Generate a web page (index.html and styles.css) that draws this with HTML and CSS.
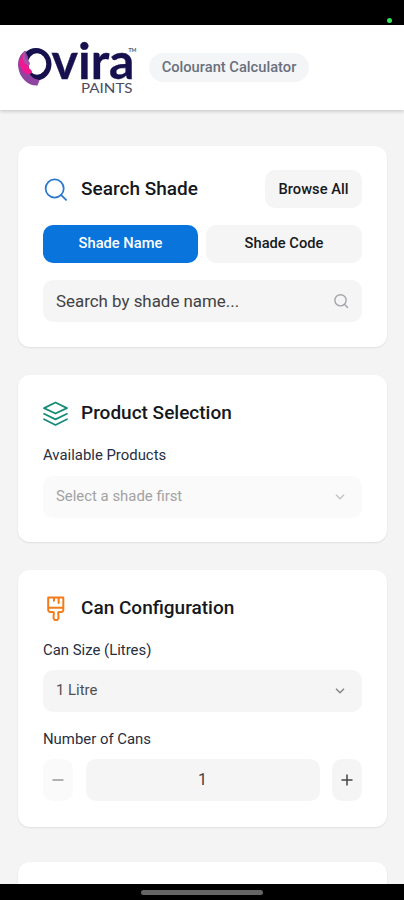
FILE: index.html
```
<!DOCTYPE html>
<html lang="en">
<head>
<meta charset="utf-8">
<meta name="viewport" content="width=device-width, initial-scale=1">
<title>Ovira Paints</title>
<link rel="stylesheet" href="styles.css">
</head>
<body>
<div class="status"><span class="dot"></span></div>
<header class="header">
  <svg class="logo" width="122" height="58" viewBox="16 38 122 58" role="img" aria-label="Ovira Paints">
    <path class="ink" fill-rule="evenodd" d="M36 48a15.500 16.200 0 1 1-.01 32.400a15.500 16.200 0 1 1 .01-32.400ZM37 53.300a9.300 10.700 0 1 0 .01 21.400a9.300 10.700 0 1 0-.01-21.400Z"/>
    <path fill="#8f45a0" d="M25 51C19.500 54 17.500 61 18.200 67C19.500 78 28 86 37.500 85.500L39.500 80C34 79 31 77 29.500 73L28 57Z"/>
    <path fill="#f01891" d="M23.500 53C18.500 59 19 68 24 72.500C26.500 74.800 30 75 32 72.500C32.500 70.500 30 69.500 29 68C28 66.500 28.500 65.500 29.500 64.500C26 61 25 57 23.500 53Z"/>
    <path fill="#a552a8" d="M26.500 50.500C24.500 54 24.500 58.500 27.500 60.500C30 61.500 31 64 28.500 65.500C23.500 64.500 21 57 24 51.500Z"/>
    <text class="ink wordmark" x="51.500" y="78.700" textLength="83" lengthAdjust="spacingAndGlyphs">vira</text>
    <text class="sub" x="81" y="93.300" textLength="51.500" lengthAdjust="spacingAndGlyphs">PAINTS</text>
    <text class="tm" x="128.500" y="51.500" textLength="8" lengthAdjust="spacingAndGlyphs">TM</text>
  </svg>
  <span class="pill">Colourant Calculator</span>
</header>
<main class="main">
  <section class="card search">
    <div class="head">
      <svg class="icon blue" viewBox="0 0 24 24"><circle cx="11.200" cy="11" r="8.700"/><path d="m17.500 17.300 4.700 4.700"/></svg>
      <h2>Search Shade</h2>
      <button class="btn browse">Browse All</button>
    </div>
    <div class="tabs">
      <button class="btn active">Shade Name</button>
      <button class="btn">Shade Code</button>
    </div>
    <div class="field">
      <span class="query">Search by shade name...</span>
      <svg class="glass" viewBox="0 0 16 16"><circle cx="7.500" cy="7.300" r="5.600"/><path d="m11.600 11.500 3 3"/></svg>
    </div>
  </section>
  <section class="card product">
    <div class="head">
      <svg class="icon green" viewBox="0 0 24 24"><path d="M12 1.500 23 6.800 12 12 1 6.800ZM1 12.300l11 5.300 11-5.300M1 17.500l11 5.500 11-5.500"/></svg>
      <h2>Product Selection</h2>
    </div>
    <span class="label">Available Products</span>
    <div class="field disabled">
      <span class="value">Select a shade first</span>
      <svg class="chev" viewBox="0 0 10 6"><path d="m1 .8 4 4 4-4"/></svg>
    </div>
  </section>
  <section class="card config">
    <div class="head">
      <svg class="icon orange" viewBox="0 0 24 24"><path d="M5 1.500h14.500v12a1.800 1.800 0 0 1-1.800 1.800h-2.200c-.8 0-1 .6-.9 1.300l.3 3.700c0 1.500-1.200 3-2.400 3s-2.400-1.500-2.400-3l.3-3.700c.1-.7-.1-1.300-.9-1.300H6.800A1.800 1.800 0 0 1 5 13.500ZM5 11.300h14.500M10.500 1.500v3M15 1.500v5.200"/></svg>
      <h2>Can Configuration</h2>
    </div>
    <span class="label">Can Size (Litres)</span>
    <div class="field">
      <span class="value">1 Litre</span>
      <svg class="chev" viewBox="0 0 10 6"><path d="m1 .8 4 4 4-4"/></svg>
    </div>
    <span class="label second">Number of Cans</span>
    <div class="stepper">
      <button class="btn step off"><svg viewBox="0 0 12 12"><path d="M.5 6h11"/></svg></button>
      <div class="count">1</div>
      <button class="btn step"><svg viewBox="0 0 12 12"><path d="M.5 6h11M6 .5v11"/></svg></button>
    </div>
  </section>
  <section class="card next"></section>
</main>
<footer class="nav"><span class="handle"></span></footer>
</body>
</html>
```
FILE: styles.css
```
* { box-sizing: border-box; }
body {
  margin: 0;
  height: 900px;
  overflow: hidden;
  display: flex;
  flex-direction: column;
  background: #f4f4f4;
  color: #15181d;
  font-family: Roboto, "Liberation Sans", sans-serif;
}
.status {
  flex: none;
  height: 25px;
  background: #000;
  display: flex;
  justify-content: flex-end;
  padding: 18px 12px 0 0;
}
.dot { width: 5px; height: 5px; border-radius: 50%; background: #35e65b; }
.header {
  flex: none;
  height: 85px;
  background: #fff;
  box-shadow: 0 1px 4px rgba(0, 0, 0, .22);
  display: flex;
  align-items: flex-start;
  padding: 13px 16px 0;
  gap: 11px;
}
.logo { flex: none; overflow: visible; }
.ink { fill: #17104e; }
.wordmark { font: 700 49px Lato, sans-serif; stroke: #17104e; stroke-width: .3; }
.sub { font: 400 12.500px Lato, sans-serif; fill: #4c4a63; }
.tm { font: 700 5.500px Lato, sans-serif; fill: #555; }
.pill {
  margin-top: 15px;
  width: 160px;
  height: 29px;
  border-radius: 15px;
  background: #f3f5f7;
  color: #6a707d;
  font-size: 14.700px;
  font-weight: 500;
  line-height: 28px;
  text-align: center;
  white-space: nowrap;
}
.main {
  flex: 1;
  min-height: 0;
  overflow: hidden;
  padding: 36px 17px 0 18px;
  display: flex;
  flex-direction: column;
}
.card {
  flex: none;
  background: #fff;
  border-radius: 12px;
  box-shadow: 0 1px 2px rgba(0, 0, 0, .09);
  padding: 24px 25px 0;
}
.search { height: 201px; margin-bottom: 28px; }
.product { height: 167px; margin-bottom: 28px; }
.config { height: 257px; margin-bottom: 35px; }
.next { height: 60px; }
.head { display: flex; align-items: center; height: 38px; }
.product .head, .config .head { height: 28px; }
.icon {
  width: 25px;
  height: 25px;
  margin-right: 13px;
  fill: none;
  stroke-width: 1.700;
  stroke-linecap: round;
  stroke-linejoin: round;
}
.blue { stroke: #2b78d0; }
.green { stroke: #168c76; }
.orange { stroke: #f47b18; stroke-width: 1.900; }
h2 {
  margin: 0;
  font-size: 19px;
  line-height: 24px;
  font-weight: 500;
  white-space: nowrap;
}
.btn {
  border: 0;
  padding: 0;
  background: #f5f5f5;
  border-radius: 10px;
  color: #17191c;
  font: 500 14.700px/20px Roboto, sans-serif;
  white-space: nowrap;
}
.browse { width: 97px; height: 38px; margin-left: auto; }
.tabs { display: grid; grid-template-columns: 155px 156px; gap: 8px; margin-top: 17px; }
.tabs .btn { height: 38px; padding-bottom: 2px; }
.tabs .active { background: #0874dc; color: #fff; }
.field {
  height: 42px;
  border-radius: 10px;
  background: #f5f5f5;
  display: flex;
  align-items: center;
  justify-content: space-between;
  padding: 0 13px;
  font-size: 14.900px;
  color: #505050;
}
.search .field { margin-top: 17px; }
.query { font-size: 16.900px; color: #424242; }
.value { padding-bottom: 2px; }
.glass { width: 16px; height: 16px; fill: none; stroke: #a2a5aa; stroke-width: 1.400; stroke-linecap: round; }
.chev {
  width: 10px;
  height: 6px;
  margin-right: 4px;
  fill: none;
  stroke: #858585;
  stroke-width: 1.500;
}
.disabled { background: #fafafa; color: #a2a2a2; }
.disabled .chev { stroke: #c4c4c4; }
.label {
  display: block;
  margin: 18px 0 11px;
  font-size: 14.900px;
  line-height: 20px;
  color: #272e40;
}
.config .label { margin-bottom: 10px; }
.config .second { margin: 17px 0 10px; }
.stepper { display: grid; grid-template-columns: 30px 234px 30px; justify-content: space-between; height: 42px; }
.count {
  background: #f5f5f5;
  border-radius: 10px;
  text-align: center;
  line-height: 42px;
  font-size: 16px;
  color: #424242;
}
.step { display: flex; align-items: center; justify-content: center; }
.step svg { width: 12px; height: 12px; fill: none; stroke: #444; stroke-width: 1.500; }
.off { background: #fafafa; }
.off svg { stroke: #999; }
.nav {
  flex: none;
  height: 16px;
  background: #000;
  display: flex;
  align-items: center;
  justify-content: center;
}
.handle { width: 122px; height: 5px; border-radius: 3px; background: #656565; }
```
